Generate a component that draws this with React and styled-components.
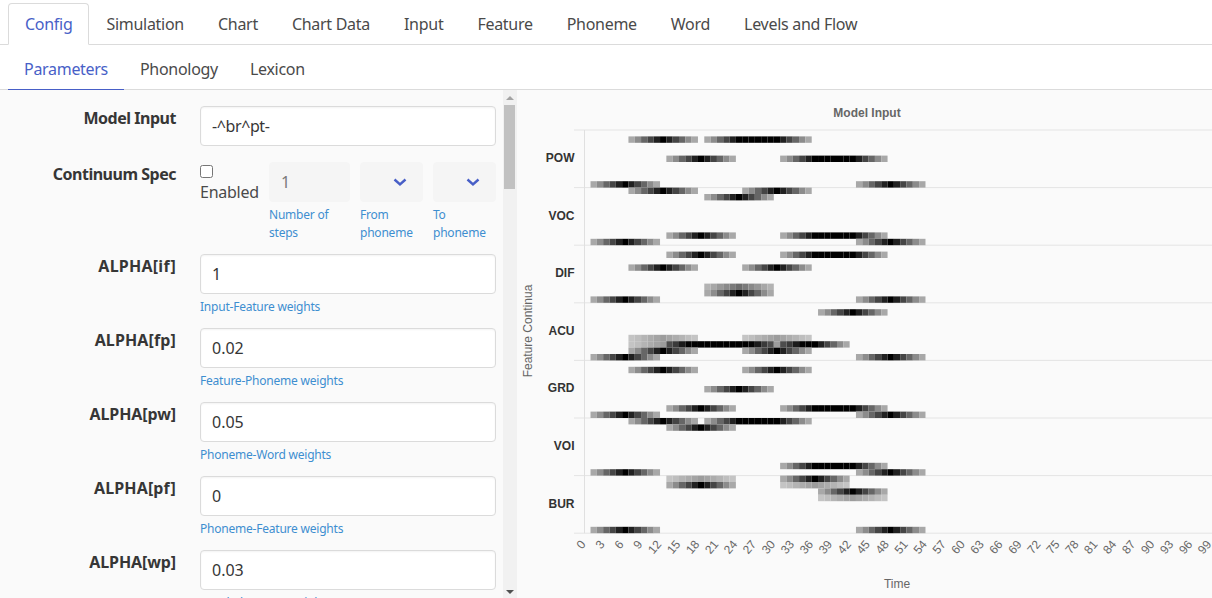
import React from "react";
import styled, { createGlobalStyle } from "styled-components";

const Global = createGlobalStyle`
  html, body { margin: 0; padding: 0; height: 100%; overflow: hidden; background: #fff; }
  body { font-family: "Noto Sans", "Open Sans", sans-serif; font-size: 16px; line-height: 24px; color: #4a4a4a; }
  * { box-sizing: border-box; }
`;

const Page = styled.div`display: flex; flex-direction: column; width: 1212px; height: 598px; overflow: hidden;`;
const TopTabs = styled.div`
  display: flex; height: 45px; padding: 3px 0 0 8px; border-bottom: 1px solid #dbdbdb; flex: none;
`;
const TopTab = styled.div`
  height: 42px; padding: 8px 16px; border: 1px solid ${p => (p.$active ? "#dbdbdb" : "transparent")};
  border-bottom-color: ${p => (p.$active ? "#fff" : "transparent")}; border-radius: 4px 4px 0 0;
  background: ${p => (p.$active ? "#fff" : "transparent")};
  color: ${p => (p.$active ? "#485fc7" : "#4a4a4a")}; white-space: nowrap; letter-spacing: -0.285px;
`;
const SubTabs = styled.div`
  display: flex; height: 45px; padding: 4px 0 0 8px; border-bottom: 1px solid #dbdbdb; flex: none;
`;
const SubTab = styled.div`
  height: 41px; padding: 8px 16px; border-bottom: 1px solid ${p => (p.$active ? "#485fc7" : "transparent")};
  color: ${p => (p.$active ? "#485fc7" : "#4a4a4a")}; white-space: nowrap; letter-spacing: -0.3px;
`;
const Main = styled.div`display: flex; flex: 1; min-height: 0; background: #fafafa;`;
const Form = styled.div`
  width: 503px; flex: none; overflow: hidden; padding: 16px 7px 0 0; display: flex; flex-direction: column;
`;
const Row = styled.div`
  display: grid; grid-template-columns: 176px 296px; column-gap: 24px; flex: none;
  margin-bottom: ${p => p.$gap || 12}px;
`;
const Label = styled.label`
  text-align: right; font-weight: 700; color: #363636; line-height: 24px; letter-spacing: ${p => p.$ls}px;
`;
const Input = styled.div`
  height: 40px; padding: 7px 11px; border-radius: 4px; border: 1px solid ${p => (p.$disabled ? "#f5f5f5" : "#dbdbdb")};
  background: ${p => (p.$disabled ? "#f5f5f5" : "#fff")}; color: ${p => (p.$disabled ? "#7a7a7a" : "#363636")};
  box-shadow: ${p => (p.$disabled ? "none" : "inset 0 0.0625em 0.125em rgba(10,10,10,.05)")};
  position: relative; font-size: 16px; line-height: 24px; letter-spacing: ${p => p.$ls || 0}px;
`;
const Help = styled.p`
  margin: 4px 0 0; font-size: 12px; line-height: 18px; color: #3e8ed0; letter-spacing: -0.22px;
`;
const Spec = styled.div`display: grid; grid-template-columns: 59px 81px 63px 63px; column-gap: 10px;`;
const EnableBox = styled.div`display: flex; flex-direction: column; letter-spacing: -0.25px; white-space: nowrap;`;
const Check = styled.span`
  width: 13px; height: 13px; margin: 3px 0 2px; border: 1px solid #767676; border-radius: 2.5px; background: #fff; display: block;
`;
const Select = styled(Input)`display: flex; justify-content: flex-end; align-items: center; padding: 0 15px 0 0;`;
const Scroll = styled.div`
  width: 14px; flex: none; background: #f1f1f1; display: flex; flex-direction: column; align-items: center;
  justify-content: space-between; position: relative;
`;
const Arrow = styled.span`
  width: 0; height: 0; margin: 6px 0 4px; border-left: 4px solid transparent; border-right: 4px solid transparent;
  ${p => p.$down ? "border-top: 4px solid #505050;" : "border-bottom: 4px solid #a3a3a3;"}
`;
const Thumb = styled.div`position: absolute; top: 15px; left: 1px; width: 11px; height: 84px; background: #c1c1c1;`;
const ChartBox = styled.div`flex: 1; min-width: 0; background: #fafafa;`;
const ChartSvg = styled.svg`display: block; width: 695px; height: 508px; font-family: "Liberation Sans", Arial, sans-serif;`;

const Chevron = () => (
  <svg width="14" height="10" viewBox="0 0 14 10"><path d="M1.5 2.5 7 7.5l5.5-5" fill="none" stroke="#485fc7" strokeWidth="2.4" /></svg>
);

const top = ["Config", "Simulation", "Chart", "Chart Data", "Input", "Feature", "Phoneme", "Word", "Levels and Flow"];
const sub = ["Parameters", "Phonology", "Lexicon"];
const fields = [
  ["ALPHA[if]", "1", "Input-Feature weights", 0.24],
  ["ALPHA[fp]", "0.02", "Feature-Phoneme weights", 0.13],
  ["ALPHA[pw]", "0.05", "Phoneme-Word weights", -0.1],
  ["ALPHA[pf]", "0", "Phoneme-Feature weights", 0.13],
  ["ALPHA[wp]", "0.03", "Word-Phoneme weights", -0.1],
];

/* chart data */
const AX = 67.5, X0 = 67.2, CW = 6.32, Y0 = 40, CH = 6.4;
const shape = [1, 0.87, 0.73, 0.6, 0.45, 0.34];
const series = {
  1: [12, 24, 30], 4: [18, 36, 42], 8: [6, 48],
  9: [12, 30], 10: [24], 16: [18, 36, 42], 17: [6, 48],
  19: [18, 36, 42], 21: [12, 30], 24: [[24, "m"]], 25: [24], 26: [6, 48],
  28: [42], 32: [[12, "l"], [30, "l"]], 33: [[12, "l"], 18, 24, [30, "l"], 36], 34: [12, 30], 35: [6, 48],
  37: [12, 30], 40: [24], 43: [18, 36, 42], 44: [6, 48],
  45: [12, 24, 30], 46: [18], 52: [36, 42], 53: [6, 48],
  54: [[18, "l"], 36], 55: [18, [36, "l"]], 56: [42], 57: [[42, "l"]], 62: [6, 48],
};
const act = (d, kind) => {
  const s = shape[Math.abs(d)];
  if (kind === "l") return 0.23 + (s - 0.34) * 0.24;
  if (kind === "m") return 0.3 + (s - 0.34) * 0.42;
  return s;
};
const cells = [];
Object.entries(series).forEach(([row, items]) => {
  const vals = {};
  items.forEach(it => {
    const [c, k] = Array.isArray(it) ? it : [it];
    for (let d = -5; d <= 5; d++) vals[c + d] = (vals[c + d] || 0) + act(d, k);
  });
  Object.entries(vals).forEach(([col, v]) => {
    const g = Math.round(255 * (1 - Math.min(1, v)));
    cells.push({ key: row + "-" + col, x: X0 + col * CW, y: Y0 + row * CH, fill: `rgb(${g},${g},${g})` });
  });
});
const cats = ["POW", "VOC", "DIF", "ACU", "GRD", "VOI", "BUR"];
const ticks = Array.from({ length: 34 }, (_, i) => i * 3);
const Chart = () => (
  <ChartSvg viewBox="0 0 695 508">
    <text x="350" y="27" textAnchor="middle" fontSize="12" fontWeight="700" fill="#666">Model Input</text>
    {cats.map((c, i) => (
      <text key={c} x="57.5" y={Y0 + (i + 0.5) * 57.6 + 3.2} textAnchor="end" fontSize="12" fontWeight="700" fill="#333">{c}</text>
    ))}
    {Array.from({ length: 8 }, (_, i) => (
      <line key={i} x1="57" x2="695" y1={Y0 + i * 57.6} y2={Y0 + i * 57.6} stroke="#e4e4e4" />
    ))}
    <line x1={AX} x2={AX} y1={Y0} y2={Y0 + 403.2} stroke="#e0e0e0" />
    {cells.map(c => <rect key={c.key} x={c.x} y={c.y} width={CW} height={CH} fill={c.fill} />)}
    {ticks.map(t => {
      const x = X0 + t * CW - 1, y = 452;
      return <text key={t} x={x} y={y + 4} textAnchor="end" fontSize="12" fill="#666" transform={`rotate(-50 ${x} ${y})`}>{t}</text>;
    })}
    <text x="380" y="498" textAnchor="middle" fontSize="12" fill="#666">Time</text>
    <text transform="translate(15 241) rotate(-90)" textAnchor="middle" fontSize="12" fill="#666">Feature Continua</text>
  </ChartSvg>
);

export default function App() {
  return (
    <Page>
      <Global />
      <TopTabs>{top.map((t, i) => <TopTab key={t} $active={i === 0}>{t}</TopTab>)}</TopTabs>
      <SubTabs>{sub.map((t, i) => <SubTab key={t} $active={i === 0}>{t}</SubTab>)}</SubTabs>
      <Main>
        <Form>
          <Row $gap={16}>
            <Label $ls={-0.47}>Model Input</Label>
            <Input $ls={-0.4}>-^br^pt-</Input>
          </Row>
          <Row>
            <Label $ls={-0.49}>Continuum Spec</Label>
            <Spec>
              <EnableBox><Check />Enabled</EnableBox>
              <div><Input $disabled>1</Input><Help>Number of steps</Help></div>
              <div><Select $disabled><Chevron /></Select><Help>From phoneme</Help></div>
              <div><Select $disabled><Chevron /></Select><Help>To phoneme</Help></div>
            </Spec>
          </Row>
          {fields.map(([l, v, h, ls]) => (
            <Row key={l}>
              <Label $ls={ls}>{l}</Label>
              <div><Input>{v}</Input><Help>{h}</Help></div>
            </Row>
          ))}
        </Form>
        <Scroll><Arrow /><Thumb /><Arrow $down /></Scroll>
        <ChartBox><Chart /></ChartBox>
      </Main>
    </Page>
  );
}
